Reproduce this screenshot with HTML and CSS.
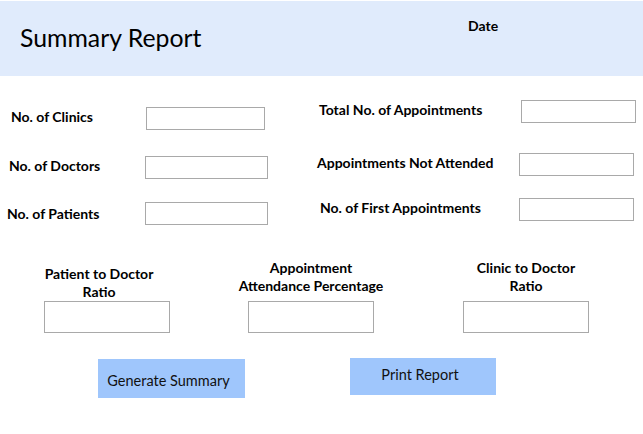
FILE: index.html
```html
<!DOCTYPE html>
<html lang="en">
<head>
<meta charset="utf-8">
<title>Summary Report</title>
<link rel="stylesheet" href="styles.css">
</head>
<body>
<header class="header">
  <h1 class="title">Summary Report</h1>
  <div class="date">Date</div>
</header>
<main class="form">
  <section class="fields">
    <div class="col col-left">
      <div class="row row-l1"><label class="lbl lbl-clinics">No. of Clinics</label><input class="box box-l1" type="text"></div>
      <div class="row row-l2"><label class="lbl lbl-doctors">No. of Doctors</label><input class="box box-l2" type="text"></div>
      <div class="row row-l3"><label class="lbl lbl-patients">No. of Patients</label><input class="box box-l3" type="text"></div>
    </div>
    <div class="col col-right">
      <div class="row row-r1"><label class="lbl lbl-total">Total No. of Appointments</label><input class="box box-r1" type="text"></div>
      <div class="row row-r2"><label class="lbl lbl-notatt">Appointments Not Attended</label><input class="box box-r2" type="text"></div>
      <div class="row row-r3"><label class="lbl lbl-first">No. of First Appointments</label><input class="box box-r3" type="text"></div>
    </div>
  </section>
  <section class="ratios">
    <div class="ratio ratio-1">
      <label class="rlbl rlbl-1">Patient to Doctor<br>Ratio</label>
      <input class="rbox" type="text">
    </div>
    <div class="ratio ratio-2">
      <label class="rlbl">Appointment<br>Attendance Percentage</label>
      <input class="rbox" type="text">
    </div>
    <div class="ratio ratio-3">
      <label class="rlbl">Clinic to Doctor<br>Ratio</label>
      <input class="rbox" type="text">
    </div>
  </section>
  <section class="actions">
    <button class="btn btn-generate" type="button">Generate Summary</button>
    <button class="btn btn-print" type="button">Print Report</button>
  </section>
</main>
</body>
</html>
```
FILE: styles.css
```css
* { box-sizing: border-box; }
html, body { margin: 0; padding: 0; background: #ffffff; }
body {
  width: 643px;
  height: 434px;
  overflow: hidden;
  font-family: Lato, "Open Sans", sans-serif;
  color: #000;
}

.header {
  margin-top: 1px;
  height: 75px;
  background: #e0ebfc;
  display: flex;
  align-items: flex-start;
  padding-left: 20px;
}
.title {
  margin: 0;
  padding-top: 22px;
  font-size: 24.8px;
  font-weight: 400;
  line-height: 30px;
  width: 448px;
}
.date {
  padding-top: 16px;
  font-size: 14px;
  font-weight: 700;
  line-height: 18px;
}

.fields {
  display: flex;
  align-items: flex-start;
}
.col { display: flex; flex-direction: column; }
.col-left { padding-top: 31px; padding-left: 9px; width: 319px; }
.col-right { padding-top: 24px; }

.row {
  display: flex;
  align-items: center;
  height: 23px;
}
.row-l2 { margin-top: 26px; }
.row-l3 { margin-top: 23px; }
.row-r2 { margin-top: 30px; }
.row-r3 { margin-top: 22px; }

.lbl {
  font-size: 14px;
  font-weight: 700;
  line-height: 18px;
  white-space: nowrap;
  margin-top: -3px;
}
.col-left .lbl { width: 136px; }
.col-right .lbl { width: 200px; }
.lbl-clinics { margin-left: 2px; width: 135px !important; }
.lbl-patients { margin-left: -2px; width: 138px !important; margin-top: 1px; }
.lbl-notatt { margin-left: -2px; width: 201px !important; }
.lbl-first { margin-left: 1px; width: 199px !important; }

.box {
  height: 23px;
  border: 1px solid #a9a9a9;
  background: #fff;
  padding: 0;
  margin: 0;
  outline: none;
}
.box-l1 { width: 119px; }
.box-l2, .box-l3 { width: 123px; }
.box-r1, .box-r2, .box-r3 { width: 115px; }
.box-r1 { margin-left: 2px; }
.box-r2 { margin-left: 1px; }

.ratios {
  display: flex;
  align-items: flex-end;
  margin-top: 34px;
  padding-left: 44px;
}
.ratio {
  width: 126px;
  display: flex;
  flex-direction: column;
  align-items: center;
}
.ratio-2 { margin-left: 78px; }
.ratio-3 { margin-left: 89px; }
.rlbl {
  font-size: 14px;
  font-weight: 700;
  line-height: 18px;
  text-align: center;
  white-space: nowrap;
  margin-bottom: 6px;
}
.rlbl-1 { margin-bottom: 0; margin-right: 16px; }
.rbox {
  width: 126px;
  height: 32px;
  border: 1px solid #a9a9a9;
  background: #fff;
  padding: 0;
  margin: 0;
  outline: none;
}

.actions {
  display: flex;
  align-items: flex-start;
  margin-top: 25px;
  padding-left: 98px;
}
.btn {
  border: none;
  background: #9fc6fc;
  font-family: Lato, "Open Sans", sans-serif;
  font-size: 14.5px;
  font-weight: 400;
  color: #111;
  padding: 0 6px 0 0;
  margin: 0;
}
.btn-generate { width: 147px; height: 39px; margin-top: 1px; padding-top: 3px; }
.btn-print { width: 146px; height: 37px; margin-left: 105px; padding-bottom: 4px; }
```
